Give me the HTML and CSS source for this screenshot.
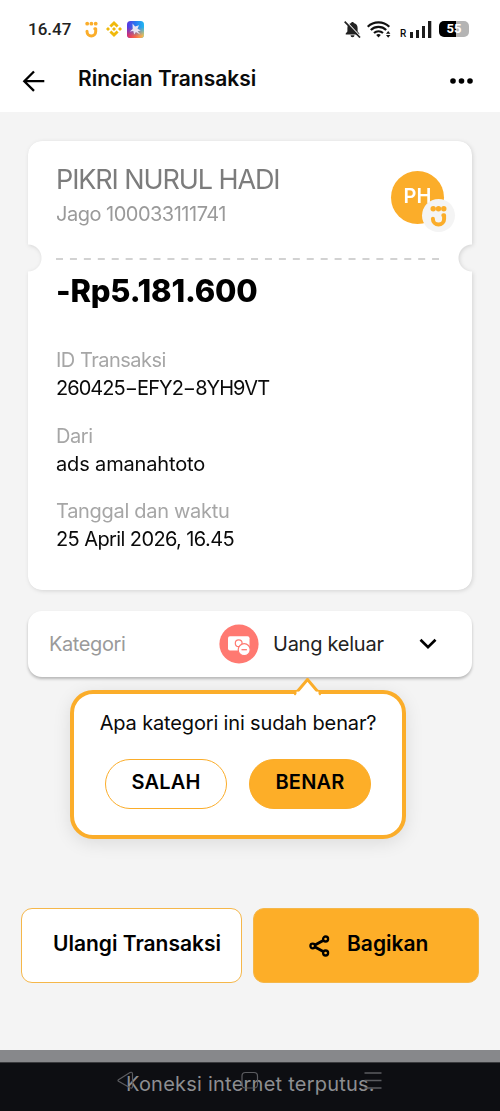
FILE: index.html
```html
<!DOCTYPE html>
<html lang="id">
<head>
<meta charset="utf-8">
<title>Rincian Transaksi</title>
<link rel="stylesheet" href="styles.css">
</head>
<body>
<div class="screen">
  <header class="top">
    <div class="status">
      <span class="time">16.47</span>
      <svg class="st-jago" width="13" height="17" viewBox="0 0 13 17"><g fill="#fbad2a"><circle cx="2.200" cy="2.700" r="1.900"/><circle cx="6.400" cy="2.700" r="1.900"/><circle cx="10.700" cy="2.700" r="1.900"/></g><path d="M2 10.200v.4a4.300 4.300 0 0 0 8.700 0V7.800H9.800" fill="none" stroke="#fbad2a" stroke-width="3" stroke-linecap="round" stroke-linejoin="round"/></svg>
      <svg class="st-bnb" width="16" height="16" viewBox="0 0 16 16"><g fill="#f0b90b"><path d="M8 0l4.600 4.600-2 2L8 4 5.400 6.600l-2-2z"/><path d="M8 16l4.600-4.600-2-2L8 12 5.400 9.400l-2 2z"/><path d="M8 6l2 2-2 2-2-2zM2 6l2 2-2 2-2-2zM14 6l2 2-2 2-2-2z"/></g></svg>
      <svg class="st-app" width="17" height="17" viewBox="0 0 17 17"><defs><linearGradient id="g1" x1="0" y1="0" x2="1" y2="0"><stop offset="0" stop-color="#5a35e0"/><stop offset=".5" stop-color="#2878f0"/><stop offset="1" stop-color="#22b8f0"/></linearGradient><linearGradient id="g2" x1="0" y1="0" x2="1" y2="0"><stop offset="0" stop-color="#e02868"/><stop offset=".5" stop-color="#f46a48"/><stop offset="1" stop-color="#f8c850"/></linearGradient><linearGradient id="g3" x1="0" y1="0" x2="0" y2="1"><stop offset=".35" stop-color="#000"/><stop offset=".9" stop-color="#fff"/></linearGradient><mask id="m"><rect width="17" height="17" fill="url(#g3)"/></mask></defs><rect width="17" height="17" rx="3.500" fill="url(#g1)"/><rect width="17" height="17" rx="3.500" fill="url(#g2)" mask="url(#m)"/><path d="M5.500 2.500l2.600 3.100 4-1.300-1.600 3.500 3.300 1.800-3.100.7 2.600 3.200-4.400-2.600-1.700 2.600-.9-3.500-3.500.4 2.900-2.400z" fill="#e9e4f2"/></svg>
      <span class="spacer"></span>
      <svg class="st-bell" width="17" height="17" viewBox="0 0 17 17"><path d="M8.500.9c.8 0 1.300.5 1.300 1.200 2.500.7 3.800 2.600 3.800 5v3.400l1.700 2v.9H1.700v-.9l1.700-2V7.100c0-2.400 1.300-4.300 3.800-5 0-.7.500-1.200 1.300-1.200zM6.500 14.200h4a2 2 0 0 1-4 0z" fill="#222"/><path d="M1.900.3l15 15.800" stroke="#fff" stroke-width="1.400"/><path d="M.7.7l15.300 15.800" stroke="#222" stroke-width="1.700"/></svg>
      <svg class="st-wifi" width="25" height="17" viewBox="0 0 25 17"><g fill="none" stroke="#111" stroke-width="2.100"><path d="M.7 5.800a15.500 15.500 0 0 1 21.600 0"/><path d="M3.800 9a11 11 0 0 1 15.400 0"/><path d="M7 12.100a6.500 6.500 0 0 1 9 0"/></g><path d="M11.500 16.500l-2.300-2.400a3.300 3.300 0 0 1 4.600 0zM21.200 10l2.200 2.700H19zM21.200 16.700l2.200-2.700H19z" fill="#111"/></svg>
      <span class="roam">R</span>
      <svg class="st-signal" width="22" height="17" viewBox="0 0 22 17"><path d="M0 11h3v6H0zM6 9h3v8H6zM12 5h3v12h-3zM18 0h3.300v17H18z" fill="#1c1c1c"/></svg>
      <span class="battery">55</span>
    </div>
    <div class="bar">
      <svg class="back" width="23" height="23" viewBox="0 0 23 23"><path d="M12 1.500L2.300 11.200l9.700 9.700M2.300 11.200h20" fill="none" stroke="#000" stroke-width="2.300"/></svg>
      <h1 class="title">Rincian Transaksi</h1>
      <svg class="more" width="24" height="6" viewBox="0 0 24 6"><circle cx="3" cy="3" r="2.800"/><circle cx="11.500" cy="3" r="2.800"/><circle cx="20" cy="3" r="2.800"/></svg>
    </div>
  </header>

  <main class="content">
    <div class="ticket-shadow">
      <section class="ticket">
        <div class="party">
          <div>
            <div class="name">PIKRI NURUL HADI</div>
            <div class="account">Jago 100033111741</div>
          </div>
          <div class="avatar">PH
            <span class="badge"><svg width="17" height="22" viewBox="0 0 17 22"><g fill="#fbad2a"><circle cx="3.200" cy="3.700" r="2.700"/><circle cx="8.500" cy="3.700" r="2.700"/><circle cx="13.800" cy="3.700" r="2.700"/></g><path d="M2.900 13.700v.3a5.600 5.600 0 0 0 11.200 0V10.300h-.8" fill="none" stroke="#fbad2a" stroke-width="4" stroke-linecap="round" stroke-linejoin="round"/></svg></span>
          </div>
        </div>
        <svg class="dash" width="383" height="2" viewBox="0 0 383 2"><path d="M0 1h383" stroke="#d2d2d2" stroke-width="2" stroke-dasharray="7 6.930"/></svg>
        <div class="amount">-Rp5.181.600</div>
        <dl class="details">
          <div><dt class="l1">ID Transaksi</dt><dd class="v1">260425−EFY2−8YH9VT</dd></div>
          <div><dt class="l2">Dari</dt><dd class="v2">ads amanahtoto</dd></div>
          <div><dt class="l3">Tanggal dan waktu</dt><dd class="v3">25 April 2026, 16.45</dd></div>
        </dl>
      </section>
    </div>

    <section class="category">
      <span class="cat-label">Kategori</span>
      <svg class="cat-icon" width="40" height="40" viewBox="0 0 40 40"><circle cx="20" cy="20" r="19.600" fill="#ff7971"/><rect x="9" y="12.300" width="21.500" height="14.300" rx="2" fill="#fff"/><circle cx="19.700" cy="19.300" r="3.400" fill="none" stroke="#ff7971" stroke-width="1.200"/><circle cx="25.200" cy="25.700" r="6" fill="#fff" stroke="#ff7971" stroke-width="1.200"/><path d="M22.500 25.700h5.400" stroke="#ff7971" stroke-width="1.300"/></svg>
      <span class="cat-value">Uang keluar</span>
      <svg class="chevron" width="18" height="12" viewBox="0 0 18 12"><path d="M1.500 1.800L9 9.200l7.500-7.400" fill="none" stroke="#000" stroke-width="2.700"/></svg>
    </section>

    <section class="confirm">
      <svg class="pointer" width="27" height="18" viewBox="0 0 27 18"><path d="M0 16.500L13.500 1 27 16.500z" fill="#fff"/><path d="M0 16.500L4 12.700 13.500 1.500 23 12.700l4 3.800" fill="none" stroke="#fbad2a" stroke-width="3"/><path d="M2.500 13.600h22V18h-22z" fill="#fff"/></svg>
      <p class="question">Apa kategori ini sudah benar?</p>
      <div class="choices">
        <button class="pill no">SALAH</button>
        <button class="pill yes">BENAR</button>
      </div>
    </section>
  </main>

  <footer class="actions">
    <button class="action repeat">Ulangi Transaksi</button>
    <button class="action share"><svg width="21" height="22" viewBox="0 0 21 22"><g fill="none" stroke="#000" stroke-width="2.300"><circle cx="3.700" cy="11" r="2.300"/><circle cx="16.600" cy="4" r="2.500"/><circle cx="16.600" cy="18" r="2.500"/></g><path d="M6 9.900l8.200-4.500M6 12.100l8.200 4.500" stroke="#000" stroke-width="2.800"/></svg><span>Bagikan</span></button>
  </footer>
  <div class="strip"></div>
  <div class="toast">
    <span class="toast-text">Koneksi internet terputus.</span>
    <svg class="nav" width="266" height="20" viewBox="0 0 266 20"><g fill="none" stroke="#5b5c60" stroke-width="1.200"><path d="M15.500 3v12.500q0 2.500-2.500 1.300L1.500 10.200q-1-.8 0-1.500L13 1.600q2.500-1.100 2.500 1.400z"/><rect x="125" y="1.500" width="15.500" height="15.500" rx="3.500"/><path d="M247.500 2h17M247.500 9.500h17M247.500 17h17" stroke-width="1.500"/></g></svg>
  </div>
</div>
</body>
</html>
```

FILE: styles.css
```css
* { box-sizing: border-box; }
body { margin: 0; background: #f4f4f4; font-family: Inter, "Liberation Sans", sans-serif; color: #0a0a0a; }
.screen { width: 500px; height: 1111px; display: flex; flex-direction: column; overflow: hidden; background: #f4f4f4; }

.top { height: 112px; background: #fff; flex: none; }
.status { display: flex; align-items: center; height: 50px; padding: 8px 31px 0 28px; }
.status svg { flex: none; }
.time { font: 500 17px/20px Roboto, sans-serif; width: 57px; color: #222; letter-spacing: 0; }
.st-bnb { margin-left: 8px; }
.st-app { margin-left: 5px; }
.spacer { flex: 1; }
.st-wifi { margin-left: 6px; }
.roam { font: 500 10px/10px Roboto, sans-serif; margin: 9px 4px 0 8px; width: 6px; }
.battery { width: 30px; height: 16px; margin-left: 7px; border-radius: 5px; background: linear-gradient(90deg, #000 56%, #b4b4b4 56%); color: #fff; font: 700 13px/16px Roboto, sans-serif; text-align: center; }
.bar { display: flex; align-items: center; height: 62px; padding: 0 26px 0 22px; }
.title { margin: -4px 0 0 33px; font-size: 21px; line-height: 28px; font-weight: 600; flex: 1; white-space: nowrap; }

.content { flex: none; height: 796px; padding: 29px 28px 0; }
.ticket-shadow { filter: drop-shadow(1px 1px 2px rgba(0, 0, 0, .13)); }
.ticket { height: 449px; padding: 24px 28px 0; border-radius: 14px; background: #fff; -webkit-mask: radial-gradient(circle at 0 117px, transparent 13px, #000 14px) left / 50% 100% no-repeat, radial-gradient(circle at 100% 117px, transparent 13px, #000 14px) right / 50% 100% no-repeat; mask: radial-gradient(circle at 0 117px, transparent 13px, #000 14px) left / 50% 100% no-repeat, radial-gradient(circle at 100% 117px, transparent 13px, #000 14px) right / 50% 100% no-repeat; }
.party { display: flex; justify-content: space-between; height: 92px; white-space: nowrap; }
.name { font-size: 27px; line-height: 30px; font-weight: 400; color: #7c7c7c; letter-spacing: -1.1px; }
.account { margin-top: 5px; font-size: 20px; line-height: 28px; font-weight: 400; color: #9a9a9a; letter-spacing: -.5px; }
.avatar { position: relative; width: 53px; height: 53px; margin: 6px 0 0; border-radius: 50%; background: #fbad2a; color: #fff; font-size: 20px; line-height: 51px; font-weight: 600; text-align: center; }
.badge { position: absolute; left: 31px; top: 28px; width: 33px; height: 33px; border-radius: 50%; background: #f4f4f4; display: flex; align-items: center; justify-content: center; }
.dash { display: block; margin-top: 1px; }
.amount { margin-top: 11px; font-size: 31px; line-height: 40px; font-weight: 800; color: #000; letter-spacing: -.2px; white-space: nowrap; }
.details { margin: 35px 0 0; display: flex; flex-direction: column; gap: 19.5px; font-size: 20px; line-height: 28px; white-space: nowrap; }
dt { color: #a6a6a6; font-weight: 400; }
dd { margin: 0; }
.l1 { letter-spacing: -.5px; }
.l2 { letter-spacing: -.4px; }
.l3 { letter-spacing: -.3px; }
.v1 { letter-spacing: -.95px; }
.v2 { letter-spacing: -.15px; }
.v3 { letter-spacing: -.6px; }

.category { display: flex; align-items: center; height: 66px; margin-top: 21px; padding-left: 21px; border-radius: 14px; background: #fff; box-shadow: 0 2px 3px rgba(0, 0, 0, .25); font-size: 20px; line-height: 28px; white-space: nowrap; }
.cat-label { width: 169.5px; color: #9a9a9a; font-weight: 400; letter-spacing: -.4px; }
.cat-value { width: 146px; margin-left: 14.5px; color: #222; letter-spacing: -.25px; }

.confirm { position: relative; width: 336px; height: 149px; margin: 13px 0 0 42px; padding: 15px 31px 0; border: 4px solid #fbad2a; border-radius: 23px; background: #fff; box-shadow: 0 4px 18px rgba(0, 0, 0, .1); }
.pointer { position: absolute; left: 220px; top: -16px; }
.question { margin: 0 -10px; font-size: 20px; line-height: 28px; text-align: center; white-space: nowrap; letter-spacing: -.15px; }
.choices { display: flex; gap: 22px; margin-top: 22px; }
.pill { flex: none; width: 122px; height: 50px; padding: 0 0 4px; border: 1.500px solid #fbad2a; border-radius: 25px; background: #fff; font: 600 20px/28px Inter, sans-serif; letter-spacing: .2px; color: #000; }
.yes { background: #fdae28; }

.actions { display: flex; gap: 11px; flex: none; height: 142px; padding: 0 21px; }
.action { height: 75px; padding: 0; border: 1.500px solid #f5b74a; border-radius: 11px; font: 600 21px/28px Inter, sans-serif; color: #000; white-space: nowrap; }
.repeat { width: 221px; padding: 0 0 3px 11px; background: #fff; }
.share { width: 226px; display: flex; align-items: center; background: #fdae28; padding-left: 55px; }
.share span { margin: -3px 0 0 17px; }

.strip { height: 12px; flex: none; background: #87888b; }
.toast { position: relative; flex: none; height: 49px; background: #0d0e12; color: #8d8e91; border-top: 1px solid #3a3b3e; }
.toast-text { display: block; padding: 7px 0 0 126px; font-size: 20px; line-height: 28px; white-space: nowrap; letter-spacing: .23px; }
.nav { position: absolute; left: 117px; top: 8px; }
```
